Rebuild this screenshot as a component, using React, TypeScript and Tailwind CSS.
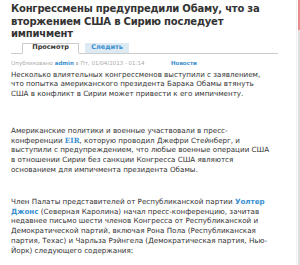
export default function App() {
  return (
    <div
      className="relative flex h-[265px] w-[300px] overflow-hidden bg-white"
      style={{ fontFamily: '"DejaVu Sans", Verdana, sans-serif' }}
    >
      <div className="flex-1 pl-[11px] pt-[3px]">
        {/* Title */}
        <h1 className="text-[10px] font-bold leading-[12.5px] tracking-[-0.2px] text-[#333]">
          Конгрессмены предупредили Обаму, что за
          <br />
          вторжением США в Сирию последует
          <br />
          импичмент
        </h1>

        {/* Tabs */}
        <div className="mt-[2px] mr-[18px] flex items-end gap-[6px] border-b border-[#ccc] pl-[11px]">
          <div className="-mb-px flex h-[11px] w-[57px] items-center justify-center border border-b-white border-[#ccc] bg-white text-[6.5px] font-bold text-[#333]">
            Просмотр
          </div>
          <div className="flex h-[10px] w-[44px] items-center justify-center bg-[#dde9f3] text-[6.5px] font-bold text-[#3a8fd0]">
            Следить
          </div>
        </div>

        {/* Meta */}
        <div className="mt-[5px] flex text-[5.5px] leading-[8px] text-[#aaa]">
          <span className="w-[160px]">
            Опубликовано <span className="font-bold text-[#3a8fd0]">admin</span> в Пт, 01/04/2013 - 01:14
          </span>
          <span className="font-bold text-[#3a8fd0]">Новости</span>
        </div>

        {/* Body */}
        <div className="mt-[3px] text-[7.15px] leading-[9.8px] text-[#333]">
          <p>
            Несколько влиятельных конгрессменов выступили с заявлением,
            <br />
            что попытка американского президента Барака Обамы втянуть
            <br />
            США в конфликт в Сирии может привести к его импичменту.
          </p>
          <p className="mt-[27px]">
            Американские политики и военные участвовали в пресс-
            <br />
            конференции <span className="font-bold text-[#3a8fd0]" style={{ fontFamily: '"DejaVu Serif", serif' }}>EIR</span>, которую проводил Джефри Стейнберг, и
            <br />
            выступили с предупреждением, что любые военные операции США
            <br />
            в отношении Сирии без санкции Конгресса США являются
            <br />
            основанием для импичмента президента Обамы.
          </p>
          <p className="mt-[22px]">
            Член Палаты представителей от Республиканской партии <span className="font-bold text-[#3a8fd0]">Уолтер</span>
            <br />
            <span className="font-bold text-[#3a8fd0]">Джонс</span> (Северная Каролина) начал пресс-конференцию, зачитав
            <br />
            недавнее письмо шести членов Конгресса от Республиканской и
            <br />
            Демократической партий, включая Рона Пола (Республиканская
            <br />
            партия, Техас) и Чарльза Рэйнгела (Демократическая партия, Нью-
            <br />
            Йорк) следующего содержания:
          </p>
        </div>
      </div>

      {/* Right edge rule */}
      <div className="flex w-[4px] shrink-0">
        <div className="w-px bg-[#f0f0f0]" />
        <div className="w-px" />
        <div className="flex w-[2px] flex-col">
          <div className="h-[30px] bg-[#e88a8a]" />
          <div className="flex-1 bg-[#ddd]" />
        </div>
      </div>
    </div>
  );
}
